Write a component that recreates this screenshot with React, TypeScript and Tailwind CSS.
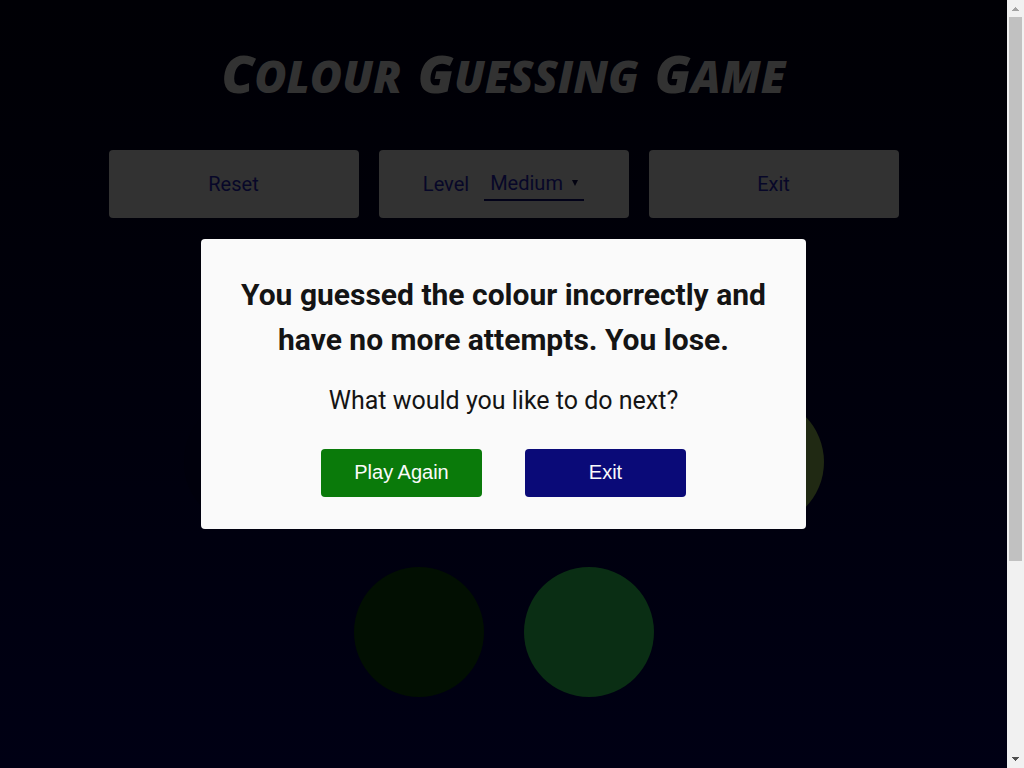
import React from "react";

const topColours = ["bg-[#00000c]", "bg-[#202913]", "bg-[#0a2f14]", "bg-[#202913]"];
const bottomColours = ["bg-[#020f02]", "bg-[#0a2e14]"];

function Circle({ colour, label }: { colour: string; label: string }) {
  return <button aria-label={label} className={`size-[130px] shrink-0 rounded-full ${colour}`} />;
}

function Scrollbar() {
  return (
    <div aria-hidden="true" className="flex w-[17px] shrink-0 flex-col items-center bg-[#f1f1f1]">
      <svg viewBox="0 0 17 17" className="size-[17px]" shapeRendering="crispEdges">
        <path d="M8 7h1v1h1v1h1v1h1v1H5v-1h1V9h1V8h1z" fill="#a3a3a3" />
      </svg>
      <div className="w-[13px] flex-[544] bg-[#c1c1c1]" />
      <div className="flex-[190]" />
      <svg viewBox="0 0 17 17" className="size-[17px]" shapeRendering="crispEdges">
        <path d="M5 6h7v1h-1v1h-1v1H9v1H8V9H7V8H6V7H5z" fill="#505050" />
      </svg>
    </div>
  );
}

export default function App() {
  const [level, setLevel] = React.useState("Medium");
  return (
    <div className="flex h-screen overflow-hidden font-['Roboto',sans-serif]">
      <div className="grid min-w-0 flex-1 bg-linear-to-b from-[#000005] to-[#000014]">
        <main className="col-start-1 row-start-1 flex flex-col items-center overflow-hidden pt-9">
          <h1 className="flex h-[74px] items-baseline gap-4 font-['Open_Sans',sans-serif] text-[44px] leading-[74px] font-extrabold text-[#323232] uppercase italic">
            <span className="inline-block first-letter:text-[52px]">Colour</span>{" "}
            <span className="inline-block first-letter:text-[52px]">Guessing</span>{" "}
            <span className="inline-block first-letter:text-[52px]">Game</span>
          </h1>
          <div className="mt-10 flex w-full max-w-[790px] gap-5 text-xl text-[#070728]">
            <button className="h-[68px] flex-1 rounded bg-[#323232]">Reset</button>
            <div className="flex h-[68px] flex-1 items-center justify-center gap-[15px] rounded bg-[#323232]">
              <label htmlFor="level">Level</label>
              <span className="grid w-[100px] items-center border-b-2 border-[#020218]">
                <select
                  id="level"
                  value={level}
                  onChange={(e) => setLevel(e.target.value)}
                  className="col-start-1 row-start-1 h-8 appearance-none pl-1.5"
                >
                  <option>Easy</option>
                  <option>Medium</option>
                  <option>Hard</option>
                </select>
                <svg viewBox="0 0 6 6" className="pointer-events-none col-start-1 row-start-1 mr-1.5 size-1.5 justify-self-end">
                  <path d="M0 0h6L3 6z" fill="#020210" />
                </svg>
              </span>
            </div>
            <button className="h-[68px] flex-1 rounded bg-[#323232]">Exit</button>
          </div>
          <div className="mt-[179px] flex flex-col items-center gap-10">
            <div className="flex gap-10">
              {topColours.map((c, i) => <Circle key={i} colour={c} label={`Colour ${i + 1}`} />)}
            </div>
            <div className="flex gap-10">
              {bottomColours.map((c, i) => <Circle key={i} colour={c} label={`Colour ${i + 5}`} />)}
            </div>
          </div>
        </main>
        <section
          role="dialog"
          aria-modal="true"
          aria-labelledby="result"
          className="z-10 col-start-1 row-start-1 flex w-3/5 flex-col items-center self-center justify-self-center rounded bg-[#fafafa] px-8 pt-[33px] pb-8 text-center text-[#141414]"
        >
          <h2 id="result" className="text-3xl leading-[45px] font-bold">
            You guessed the colour incorrectly and have no more attempts. You lose.
          </h2>
          <p className="mt-5 text-[25px] leading-[37px]">What would you like to do next?</p>
          <div className="mt-[30px] flex gap-[43px] font-['Liberation_Sans',sans-serif] text-xl text-[#fafafa]">
            <button className="h-12 w-[161px] rounded bg-[#0a7a0a] pb-0.5">Play Again</button>
            <button className="h-12 w-[161px] rounded bg-[#0a0a78] pb-0.5">Exit</button>
          </div>
        </section>
      </div>
      <Scrollbar />
    </div>
  );
}
